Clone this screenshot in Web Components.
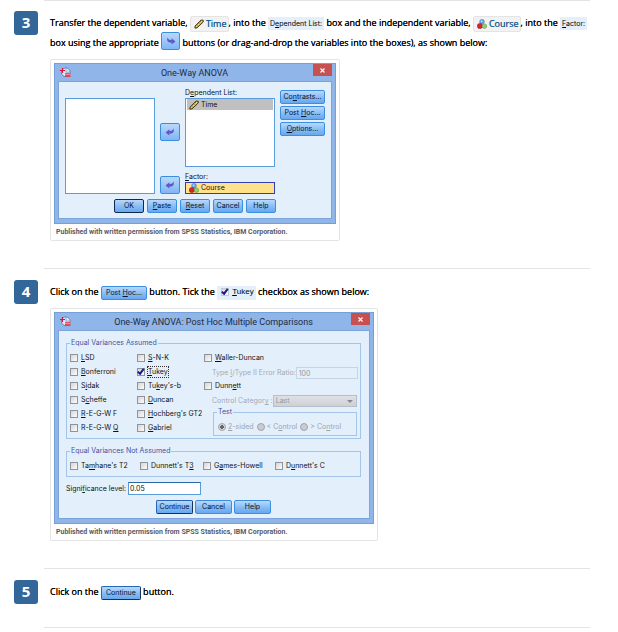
<!DOCTYPE html>
<html lang="en">
<head>
<meta charset="utf-8">
<title>One-Way ANOVA procedure</title>
<style>
body{margin:0;background:#fff;color:#000;font:400 9px/20px "Open Sans",sans-serif}
</style>
</head>
<body>
<tutorial-page></tutorial-page>
<script>
function define(name, html, init){
  const t=document.createElement('template');
  t.innerHTML=html;
  customElements.define(name, class extends HTMLElement{
    constructor(){
      super();
      this.attachShadow({mode:'open'}).append(t.content.cloneNode(true));
    }
    connectedCallback(){ if(init) init(this, this.shadowRoot); }
  });
}

/* ---- icons ---- */
define('ruler-icon', `<style>:host{display:inline-block;width:10px;height:10px;vertical-align:middle}svg{display:block}</style>
<svg viewBox="0 0 10 10" width="10" height="10"><path d="M.9 9.1 1.1 7 7.1 1 9.2 1.2 9.3 2.9 3 8.9Z" fill="#dcb02c" stroke="#33290f" stroke-width=".9"/><path d="M2.4 7.6 8 2.1" stroke="#ffe88a" stroke-width="1"/><path d="M2.9 5.5l.9.9M4.5 3.9l.9.9M6.1 2.3l.9.9" stroke="#5c4a12" stroke-width=".8"/></svg>`);

define('nominal-icon', `<style>:host{display:inline-block;width:10px;height:10px;vertical-align:middle}svg{display:block}</style>
<svg viewBox="0 0 10 10" width="10" height="10"><circle cx="5" cy="2.8" r="2.4" fill="#6fa3e2" stroke="#3f6fb5" stroke-width=".5"/><circle cx="2.9" cy="7" r="2.6" fill="#d8222e" stroke="#92141c" stroke-width=".5"/><circle cx="7.4" cy="7.2" r="2.3" fill="#8fcf6c" stroke="#4d8f35" stroke-width=".5"/><circle cx="4.5" cy="2.2" r=".8" fill="#d7e8ff"/></svg>`);

define('app-icon', `<style>:host{display:block;width:11px;height:11px}svg{display:block}</style>
<svg viewBox="0 0 11 11" width="11" height="11"><circle cx="5.8" cy="5.3" r="4.4" fill="#dce8f7" stroke="#5f86bd" stroke-width="1"/><path d="M6 1.2v4h4.3" fill="none" stroke="#7e9dca" stroke-width=".8"/><path d="M0 3.5h5M2.5 1v5" stroke="#d4143a" stroke-width="1.1"/><path d="M5 6h5.5v4H5z" fill="#e0475b"/><path d="M5 7.3h5.5" stroke="#f7c5cc" stroke-width=".7"/></svg>`);

/* ---- controls ---- */
define('spss-button', `<style>
:host{display:block}
button{display:block;box-sizing:border-box;width:100%;height:14px;margin:0;padding:0 2px;border:1px solid #3a8fe0;border-radius:2px;background:linear-gradient(#b9d8fb,#8abdf5 50%,#65a8f0);color:#06152b;font:inherit;line-height:12px;text-align:center;white-space:nowrap}
:host([default]) button{border-color:#12294f}
:host([focus]) button{border-color:#2468b4 #10335f #10335f #2468b4}
:host([inline]){display:inline-block;vertical-align:middle;font:400 7px/12px Inter,sans-serif}
:host([inline]) button{padding:0 4px}
</style><button type="button"><slot></slot></button>`);

define('arrow-button', `<style>
:host{display:inline-block;width:20px;height:18px}
:host([right]){width:19px;margin:-3px 0;vertical-align:1px}
button{display:grid;place-items:center;box-sizing:border-box;width:100%;height:100%;margin:0;padding:0;border:1px solid #3a8fe0;border-radius:2px;background:linear-gradient(#b9d8fb,#7fb6f4)}
svg{display:block}
:host([right]) svg{transform:scaleX(-1)}
</style><button type="button" aria-label="Move variable"><svg viewBox="0 0 10 8" width="10" height="8"><path d="M.5 4.4 4.4 1.2V3C6.5 3.2 8 2.4 8.2.5 10 3.4 8 6 4.4 5.6V7.6Z" fill="#6258c9"/></svg></button>`);

define('tick-box', `<style>
:host{display:block}
:host([inline]){display:inline-block;vertical-align:middle;background:#e3effb;padding:0 2px 0 4px;font:400 8px/12px "Liberation Sans",sans-serif;text-shadow:none}
label{display:inline-flex;align-items:center;gap:3px;white-space:nowrap}
input{appearance:none;flex:none;box-sizing:border-box;width:8px;height:8px;margin:0;border:1px solid #8f949b;background:linear-gradient(135deg,#d5d5d5,#fdfdfd);display:grid;place-items:center}
input:checked::after{content:"";box-sizing:border-box;width:4px;height:7px;border:solid #1a1a8c;border-width:0 2px 2px 0;transform:rotate(38deg) translate(-1px,-1px)}
:host([inline]) input{border-color:#c4cad4}
:host([focus]) span{outline:1px dotted #333}
</style><label><input type="checkbox"><span><slot></slot></span></label>`,
(h,r)=>{ r.querySelector('input').checked=h.hasAttribute('checked'); });

define('radio-dot', `<style>
:host{display:block;color:#9aa5b3}
label{display:flex;align-items:center;gap:2px;white-space:nowrap}
input{appearance:none;flex:none;box-sizing:border-box;width:8px;height:8px;margin:0;border:1px solid #a0a5ac;border-radius:50%;background:#c9cdd3}
input:checked{background:radial-gradient(#666 0 2px,#d6d9dd 2px)}
</style><label><input type="radio" disabled><span><slot></slot></span></label>`,
(h,r)=>{ r.querySelector('input').checked=h.hasAttribute('checked'); });

define('variable-chip', `<style>
:host{display:inline-flex;align-items:center;gap:2px;box-sizing:border-box;vertical-align:middle;height:16px;line-height:14px;padding:0 1px 0 3px;border:1px solid #e4e4e4;border-radius:2px;background:#f2f2f2;color:#1d6094;text-shadow:0 0 0 #1d6094;white-space:nowrap}
</style><slot></slot>`);

define('dialog-label', `<style>
:host{display:inline-block;vertical-align:middle;background:#e3effb;padding:0 2px;font:400 7px/13px Inter,sans-serif;text-shadow:none;white-space:nowrap}
</style><slot></slot>`);

define('group-box', `<style>
:host{display:block}
fieldset{min-width:0;margin:0;padding:0;border:1px solid #a3c5ea;position:relative}
legend{position:absolute;top:-6px;left:3px;padding:0 1px;background:#e3effb;color:#4452a5;line-height:10px;white-space:nowrap}
</style><fieldset><legend></legend><slot></slot></fieldset>`,
(h,r)=>{ r.querySelector('legend').textContent=h.getAttribute('label'); });

/* ---- window and figure ---- */
define('spss-window', `<style>
:host{display:block;background:#8fb5e9;border:1px solid #769fd5;box-sizing:border-box;padding:0 3px 4px;color:#111;font:400 7px/10px Inter,sans-serif}
header{display:grid;grid-template-columns:18px 1fr 19px;height:17px;align-items:center}
app-icon{margin-left:2px}
h2{margin:0;font:400 9px/16px Roboto,sans-serif;color:#1d2c42;text-align:center}
.close{align-self:start;height:12px;padding:0;margin:0;border:0;background:#c75050;color:#fff;display:grid;place-items:center}
.body{background:#e3effb;border:1px solid #7aa4da}
</style><header><app-icon></app-icon><h2></h2><button class="close" type="button" aria-label="Close"><svg viewBox="0 0 5 5" width="5" height="5"><path d="M.5.5l4 4m0-4l-4 4" stroke="#fff" stroke-width="1.1"/></svg></button></header><div class="body"><slot></slot></div>`,
(h,r)=>{ r.querySelector('h2').textContent=h.getAttribute('label'); });

define('captioned-figure', `<style>
:host{display:table;margin-top:6px}
figure{margin:0;padding:3px;border:1px solid #e4e4e4;border-radius:2px}
figcaption{padding:4px 2px 0;font:700 7px/9px Roboto,sans-serif;color:#5a5a66}
</style><figure><slot></slot><figcaption>Published with written permission from SPSS Statistics, IBM Corporation.</figcaption></figure>`);

/* ---- dialogs ---- */
define('anova-dialog', `<style>
:host{display:block;width:282px;max-width:100%}
.body{padding:6px 6px 5px;display:grid;gap:5px}
.main{display:grid;grid-template-columns:90fr 20px 90fr 45px;column-gap:5px}
.list{background:#fff;border:1px solid #5a9bdc;box-sizing:border-box}
.source{margin-top:10px}
.arrows{display:flex;flex-direction:column;justify-content:space-between;padding-top:35px}
.target{display:flex;flex-direction:column}
.target .list{height:69px;margin-bottom:5px}
.item{display:flex;align-items:center;gap:2px;height:10px;margin:0 1px;padding-left:2px}
.selected{background:#c0c0c0;height:11px}
.factor{box-sizing:border-box;height:12px;border:1px solid #3140b8;background:#ffe08b}
.side{display:flex;flex-direction:column;gap:2px;padding-top:2px}
.actions{display:grid;grid-template-columns:repeat(5,30px);gap:3px;justify-content:end;padding-right:49px}
u{text-underline-offset:1px}
</style>
<spss-window label="One-Way ANOVA"><div class="body">
<div class="main">
<div class="list source"></div>
<div class="arrows"><arrow-button></arrow-button><arrow-button></arrow-button></div>
<div class="target"><span>D<u>e</u>pendent List:</span><div class="list"><div class="item selected"><ruler-icon></ruler-icon>Time</div></div><span><u>F</u>actor:</span><div class="factor"><div class="item"><nominal-icon></nominal-icon>Course</div></div></div>
<div class="side"><spss-button>Co<u>n</u>trasts...</spss-button><spss-button>Post <u>H</u>oc...</spss-button><spss-button><u>O</u>ptions...</spss-button></div>
</div>
<div class="actions"><spss-button default>OK</spss-button><spss-button><u>P</u>aste</spss-button><spss-button><u>R</u>eset</spss-button><spss-button>Cancel</spss-button><spss-button>Help</spss-button></div>
</div></spss-window>`);

define('posthoc-dialog', `<style>
:host{display:block;width:320px;max-width:100%}
.body{padding:12px 8px 4px 7px}
.grid{display:grid;grid-template-columns:67px 67px 1fr;grid-template-rows:repeat(6,14px);grid-auto-flow:column;align-items:center;padding:8px 3px 2px}
.pair{display:flex;align-items:center;justify-content:space-between;padding-left:8px;color:#a3abb5}
.pair label{white-space:nowrap}
.pair input,.pair select{box-sizing:border-box;margin:0;font:inherit;color:#9199a3;border-radius:0}
.pair input{width:62px;height:12px;padding:0 2px;border:1px solid #c6d4e4;background:#e3effb}
.pair select{appearance:none;width:84px;height:12px;padding:0 2px;border:1px solid #b9bfc7;background:linear-gradient(#dfe1e4,#cdd0d5);opacity:1;margin-right:1px}
.pick{position:relative;display:flex}
.pick::after{content:"";position:absolute;right:5px;top:5px;border:3px solid transparent;border-top-color:#858a92;border-bottom:0}
.test{grid-row:span 2;align-self:end;margin:0 1px 0 9px}
.radios{display:flex;gap:3px;padding:9px 4px 3px;color:#9aa5b3}
.second{margin-top:12px}
.row{display:grid;grid-template-columns:70px 63px 72px 1fr;padding:9px 3px 3px}
.level{display:flex;align-items:center;gap:2px;margin-top:5px}
.level input{box-sizing:border-box;width:73px;height:13px;margin:0;padding:0 1px;border:1px solid #5a9bdc;border-top-color:#2d67a8;background:#fff;font:inherit;color:#111}
.actions{display:grid;grid-template-columns:repeat(3,37px);gap:2px;justify-content:center;margin-top:5px}
u{text-underline-offset:1px}
</style>
<spss-window label="One-Way ANOVA: Post Hoc Multiple Comparisons"><div class="body">
<group-box label="Equal Variances Assumed"><div class="grid">
<tick-box><u>L</u>SD</tick-box><tick-box><u>B</u>onferroni</tick-box><tick-box>S<u>i</u>dak</tick-box><tick-box>S<u>c</u>heffe</tick-box><tick-box><u>R</u>-E-G-W F</tick-box><tick-box>R-E-G-W <u>Q</u></tick-box>
<tick-box><u>S</u>-N-K</tick-box><tick-box checked focus><u>T</u>ukey</tick-box><tick-box>Tu<u>k</u>ey's-b</tick-box><tick-box><u>D</u>uncan</tick-box><tick-box><u>H</u>ochberg's GT2</tick-box><tick-box><u>G</u>abriel</tick-box>
<tick-box><u>W</u>aller-Duncan</tick-box>
<div class="pair"><label for="ratio">Type <u>I</u>/Type II Error Ratio:</label><input id="ratio" value="100" disabled></div>
<tick-box>Dunn<u>e</u>tt</tick-box>
<div class="pair"><label for="cat">Control Categor<u>y</u> :</label><span class="pick"><select id="cat" disabled><option>Last</option></select></span></div>
<group-box class="test" label="Test"><div class="radios"><radio-dot checked><u>2</u>-sided</radio-dot><radio-dot>&lt; C<u>o</u>ntrol</radio-dot><radio-dot>&gt; Co<u>n</u>trol</radio-dot></div></group-box>
</div></group-box>
<group-box class="second" label="Equal Variances Not Assumed"><div class="row"><tick-box>Ta<u>m</u>hane's T2</tick-box><tick-box>Dunnett's T<u>3</u></tick-box><tick-box>G<u>a</u>mes-Howell</tick-box><tick-box>D<u>u</u>nnett's C</tick-box></div></group-box>
<div class="level"><label for="sig">Signi<u>f</u>icance level:</label><input id="sig" value="0.05"></div>
<div class="actions"><spss-button focus>Continue</spss-button><spss-button>Cancel</spss-button><spss-button>Help</spss-button></div>
</div></spss-window>`);

/* ---- page ---- */
define('step-item', `<style>
:host{display:grid;grid-template-columns:24px 1fr;column-gap:6px}
.n{box-sizing:border-box;height:24px;margin-top:12px;border-radius:3px;background:#336699;color:#fff;font:700 15px/23px "Open Sans",sans-serif;text-align:center}
.content{border-top:1px solid #e4e4e4;padding:13px 0 27px 6px}
:host([start]) .n{margin-top:11px}
:host([start]) .content{padding-top:12px}
</style><div class="n"></div><div class="content"><slot></slot></div>`,
(h,r)=>{ r.querySelector('.n').textContent=h.getAttribute('number'); });

define('tutorial-page', `<style>
:host{display:block;padding:0 28px 0 14px}
p{margin:0;text-shadow:0 0 0 #000}
spss-button{text-shadow:none}
.end{margin:0 0 0 30px;border:0;border-top:1px solid #e4e4e4}
.last{margin-bottom:-2px}
u{text-underline-offset:1px}
</style>
<step-item number="3" start>
<p>Transfer the dependent variable, <variable-chip><ruler-icon></ruler-icon><span>Time</span></variable-chip>, into the <dialog-label>D<u>e</u>pendent List:</dialog-label> box and the independent variable, <variable-chip><nominal-icon></nominal-icon><span>Course</span></variable-chip>, into the <dialog-label><u>F</u>actor:</dialog-label> box using the appropriate <arrow-button right></arrow-button> buttons (or drag-and-drop the variables into the boxes), as shown below:</p>
<captioned-figure><anova-dialog></anova-dialog></captioned-figure>
</step-item>
<step-item number="4">
<p>Click on the <spss-button inline>Post <u>H</u>oc...</spss-button> button. Tick the <tick-box inline checked><u>T</u>ukey</tick-box> checkbox as shown below:</p>
<captioned-figure><posthoc-dialog></posthoc-dialog></captioned-figure>
</step-item>
<step-item number="5">
<p class="last">Click on the <spss-button inline focus>Continue</spss-button> button.</p>
</step-item>
<hr class="end">`);
</script>
</body>
</html>
